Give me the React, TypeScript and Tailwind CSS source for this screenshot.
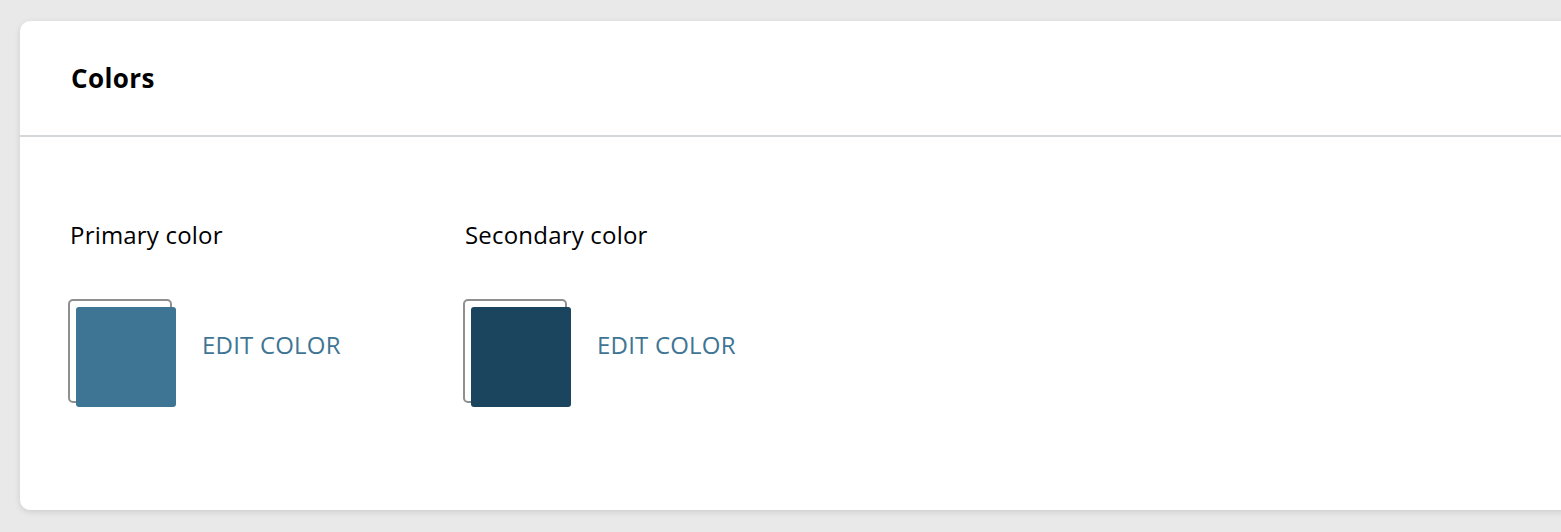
import React from "react";

type Swatch = { label: string; color: string };

const swatches: Swatch[] = [
  { label: "Primary color", color: "#3f7594" },
  { label: "Secondary color", color: "#1b455f" },
];

function ColorSwatch({ label, color }: Swatch) {
  return (
    <div className="flex flex-col">
      <p className="ml-[2px] text-[24px] leading-[30px] tracking-[0.2px] text-black">{label}</p>
      <div className="mt-[49px] flex items-center">
        <div className="relative h-[108px] w-[108px] shrink-0">
          <div className="h-[104px] w-[104px] rounded-[5px] border-2 border-[#8f8f8f]" />
          <div
            className="absolute left-[8px] top-[8px] h-[100px] w-[100px] rounded-[3px]"
            style={{ backgroundColor: color }}
          />
        </div>
        {/* label sits a little above the swatch's centre */}
        <button className="mb-[16px] ml-[26px] text-[24px] uppercase tracking-[0.2px] text-[#3f7594]">
          Edit color
        </button>
      </div>
    </div>
  );
}

export default function App() {
  return (
    <div
      className="h-[532px] w-[1561px] overflow-hidden bg-[#e9e9e9] pl-[20px] pt-[21px]"
      style={{ fontFamily: '"Open Sans", sans-serif' }}
    >
      <div className="h-[489px] w-[1600px] rounded-[10px] bg-white shadow-[0_2px_6px_rgba(0,0,0,0.12)]">
        <div className="flex h-[116px] items-center border-b-2 border-[#d5d8db] pl-[51px]">
          <h2 className="text-[26px] font-bold tracking-[0.4px] text-black">Colors</h2>
        </div>
        <div className="flex pl-[48px] pt-[83px]">
          {swatches.map((s, i) => (
            <div key={s.label} className={i === 0 ? "w-[395px]" : ""}>
              <ColorSwatch {...s} />
            </div>
          ))}
        </div>
      </div>
    </div>
  );
}
